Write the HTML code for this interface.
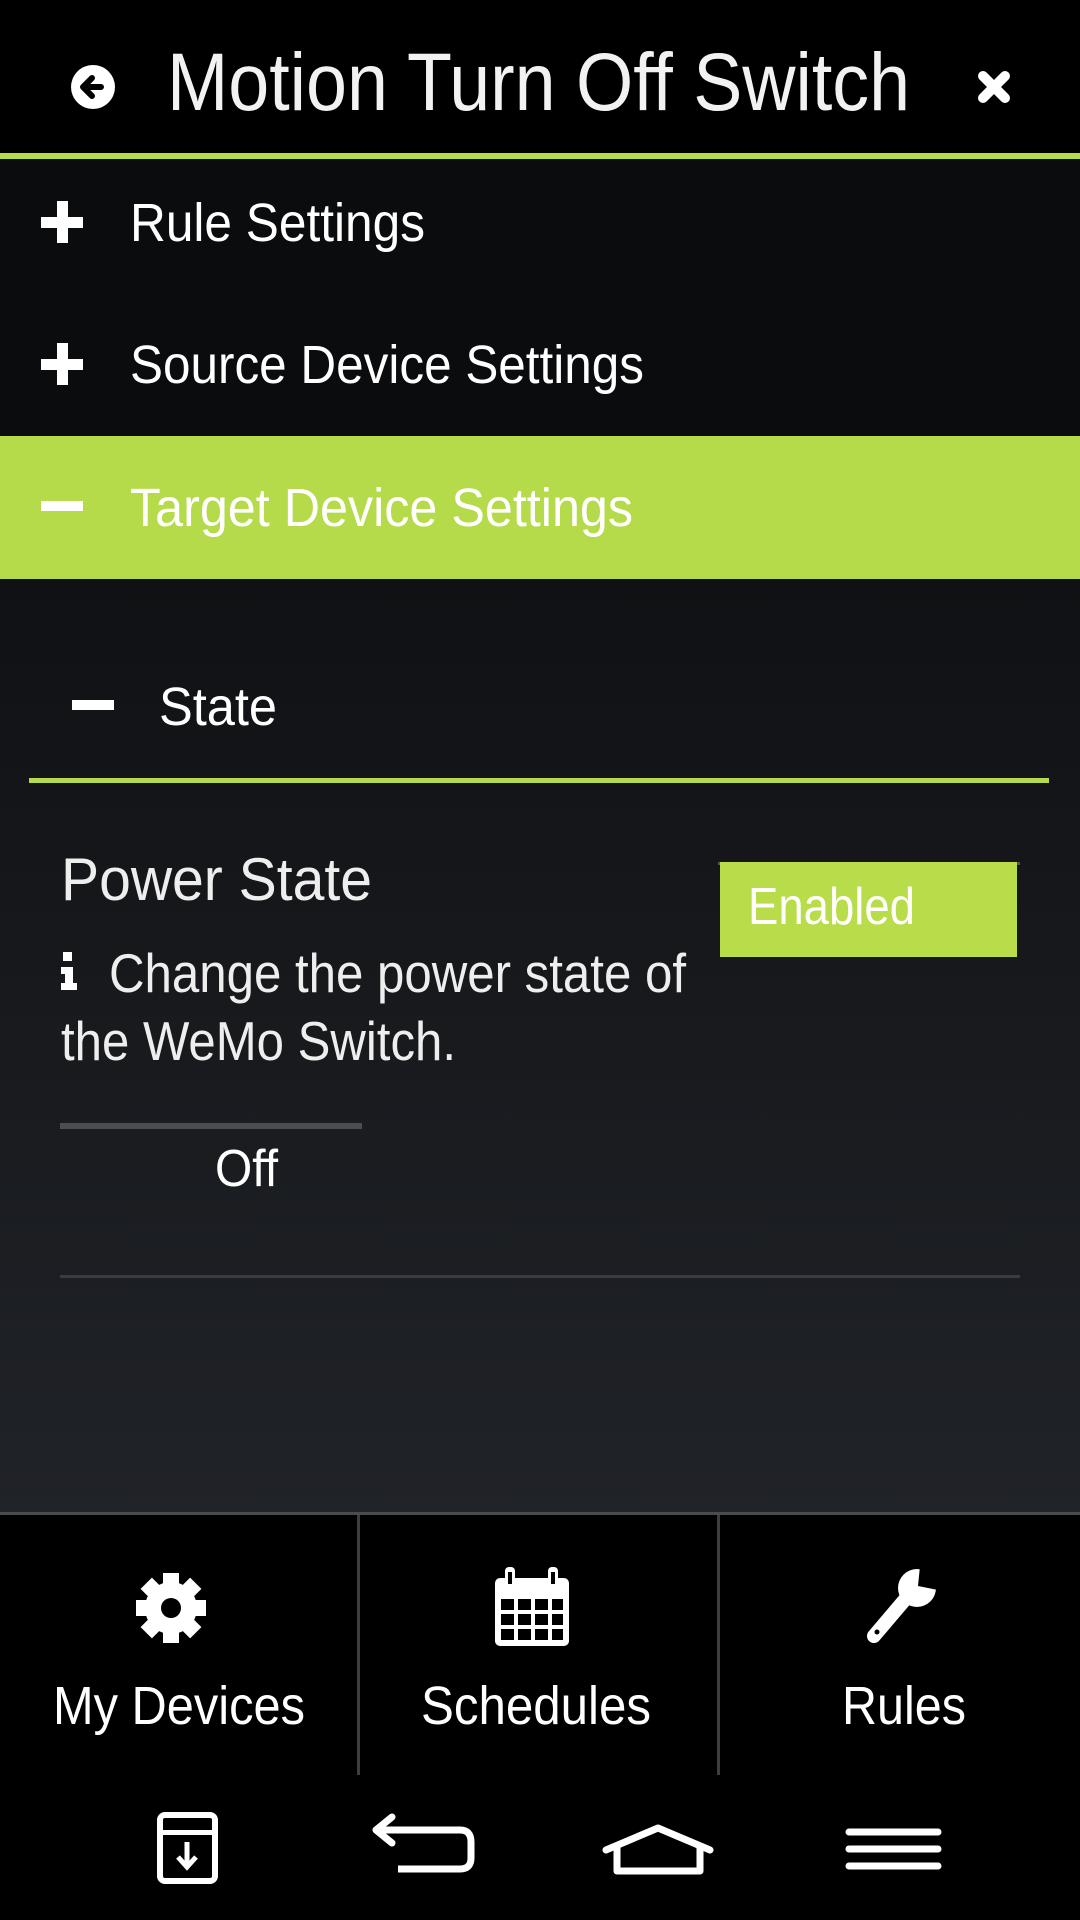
<!DOCTYPE html>
<html><head><meta charset="utf-8"><style>
html,body{margin:0;padding:0;background:#000;width:1080px;height:1920px;overflow:hidden}
svg{display:block}
text{font-family:"Liberation Sans",sans-serif;fill:#fff}
</style></head><body>
<svg width="1080" height="1920" viewBox="0 0 1080 1920" xmlns="http://www.w3.org/2000/svg">
<defs>
<linearGradient id="bg" x1="0" y1="0" x2="0" y2="1">
<stop offset="0" stop-color="#101114"/><stop offset="1" stop-color="#202328"/>
</linearGradient>
</defs>
<rect width="1080" height="1920" fill="#000"/>
<!-- header -->
<circle cx="93" cy="87" r="22" fill="#fff"/>
<path d="M101 87 H84 M92 78 L83 87 L92 96" stroke="#000" stroke-width="6" fill="none" stroke-linecap="round" stroke-linejoin="round"/>
<text x="167" y="110" font-size="82" textLength="743" lengthAdjust="spacingAndGlyphs" style="fill:#f2f2f2">Motion Turn Off Switch</text>
<path d="M983 76 L1005 98 M1005 76 L983 98" stroke="#fff" stroke-width="10" stroke-linecap="round"/>
<rect x="0" y="153" width="1080" height="6" fill="#b5db4a"/>
<!-- rows -->
<rect x="0" y="159" width="1080" height="277" fill="#0b0c0e"/>
<rect x="41" y="217" width="42" height="11" fill="#fff"/><rect x="57" y="201" width="11" height="42" fill="#fff"/>
<text x="130" y="241" font-size="54" textLength="295" lengthAdjust="spacingAndGlyphs">Rule Settings</text>
<rect x="41" y="359" width="42" height="11" fill="#fff"/><rect x="57" y="343" width="11" height="42" fill="#fff"/>
<text x="130" y="383" font-size="54" textLength="514" lengthAdjust="spacingAndGlyphs">Source Device Settings</text>
<rect x="0" y="436" width="1080" height="143" fill="#b5db4b"/>
<rect x="41" y="501" width="42" height="10" fill="#fff"/>
<text x="130" y="526" font-size="54" textLength="503" lengthAdjust="spacingAndGlyphs">Target Device Settings</text>
<!-- content -->
<rect x="0" y="579" width="1080" height="933" fill="url(#bg)"/>
<rect x="72" y="700" width="42" height="10" fill="#fff"/>
<text x="159" y="725" font-size="54" textLength="118" lengthAdjust="spacingAndGlyphs">State</text>
<rect x="29" y="778" width="1020" height="5" fill="#b5db4a"/>
<text x="61" y="900" font-size="60" textLength="311" lengthAdjust="spacingAndGlyphs" style="fill:#eee">Power State</text>
<rect x="718" y="862" width="302" height="3" fill="#555"/>
<rect x="720" y="862" width="297" height="95" fill="#b8dc4a"/>
<text x="748" y="924" font-size="52" textLength="167" lengthAdjust="spacingAndGlyphs">Enabled</text>
<rect x="63" y="952" width="9" height="9" fill="#fff"/>
<path d="M61 967 H73 V983 H77 V990 H61 V983 H65 V974 H61 Z" fill="#fff"/>
<text x="109" y="992" font-size="55" textLength="577" lengthAdjust="spacingAndGlyphs" style="fill:#eee">Change the power state of</text>
<text x="61" y="1060" font-size="55" textLength="395" lengthAdjust="spacingAndGlyphs" style="fill:#eee">the WeMo Switch.</text>
<rect x="60" y="1123" width="302" height="6" fill="#4b4d51"/>
<text x="215" y="1186" font-size="52" textLength="63" lengthAdjust="spacingAndGlyphs">Off</text>
<rect x="60" y="1275" width="960" height="3" fill="#383b40"/>
<!-- bottom tabs -->
<rect x="0" y="1512" width="1080" height="3" fill="#4a4c50"/>
<rect x="357" y="1515" width="3" height="260" fill="#3c3e42"/>
<rect x="717" y="1515" width="3" height="260" fill="#3c3e42"/>
<g transform="translate(171,1608)" fill="#fff">
<circle r="26"/>
<rect x="-8" y="-35" width="16" height="70"/>
<rect x="-8" y="-35" width="16" height="70" transform="rotate(45)"/>
<rect x="-8" y="-35" width="16" height="70" transform="rotate(90)"/>
<rect x="-8" y="-35" width="16" height="70" transform="rotate(135)"/>
<circle r="10" fill="#000"/>
</g>
<g fill="#fff">
<rect x="495" y="1578" width="74" height="68" rx="5"/>
<rect x="505" y="1567" width="10" height="22" rx="4"/>
<rect x="548" y="1567" width="10" height="22" rx="4"/>
</g>
<g fill="#000">
<rect x="508" y="1572" width="4" height="12"/><rect x="551" y="1572" width="4" height="12"/>
<rect x="501" y="1599" width="13" height="11"/><rect x="518" y="1599" width="13" height="11"/><rect x="535" y="1599" width="13" height="11"/><rect x="552" y="1599" width="11" height="11"/>
<rect x="501" y="1614" width="13" height="11"/><rect x="518" y="1614" width="13" height="11"/><rect x="535" y="1614" width="13" height="11"/><rect x="552" y="1614" width="11" height="11"/>
<rect x="501" y="1629" width="13" height="11"/><rect x="518" y="1629" width="13" height="11"/><rect x="535" y="1629" width="13" height="11"/><rect x="552" y="1629" width="11" height="11"/>
</g>
<path d="M874 1636 L908 1596" stroke="#fff" stroke-width="14" stroke-linecap="round"/>
<circle cx="917" cy="1588" r="19" fill="#fff"/>
<path d="M920 1566 L918 1586 L938 1590 L945 1566 Z" fill="#000"/>
<circle cx="877" cy="1632" r="2.5" fill="#000"/>
<text x="53" y="1724" font-size="54" textLength="252" lengthAdjust="spacingAndGlyphs">My Devices</text>
<text x="421" y="1724" font-size="54" textLength="230" lengthAdjust="spacingAndGlyphs">Schedules</text>
<text x="842" y="1724" font-size="54" textLength="124" lengthAdjust="spacingAndGlyphs">Rules</text>
<!-- nav bar -->
<rect x="160" y="1815" width="55" height="66" rx="5" fill="none" stroke="#fff" stroke-width="6"/>
<rect x="160" y="1830" width="55" height="5" fill="#fff"/>
<path d="M187 1842 V1866 M178 1857 L187 1867 L196 1857" stroke="#fff" stroke-width="5" fill="none"/>
<path d="M382 1830 H460 Q471 1830 471 1842 V1858 Q471 1869 460 1869 H398" stroke="#fff" stroke-width="7" fill="none"/>
<path d="M376 1830 L392 1817 M376 1830 L392 1843" stroke="#fff" stroke-width="7" stroke-linecap="round"/>
<path d="M606 1850 L658 1828 L710 1850 M617 1846 V1871 H700 V1846" stroke="#fff" stroke-width="7" fill="none" stroke-linejoin="round" stroke-linecap="round"/>
<g stroke="#fff" stroke-width="7" stroke-linecap="round">
<path d="M849 1832 H938 M849 1849 H938 M849 1866 H938"/>
</g>
</svg>
</body></html>
